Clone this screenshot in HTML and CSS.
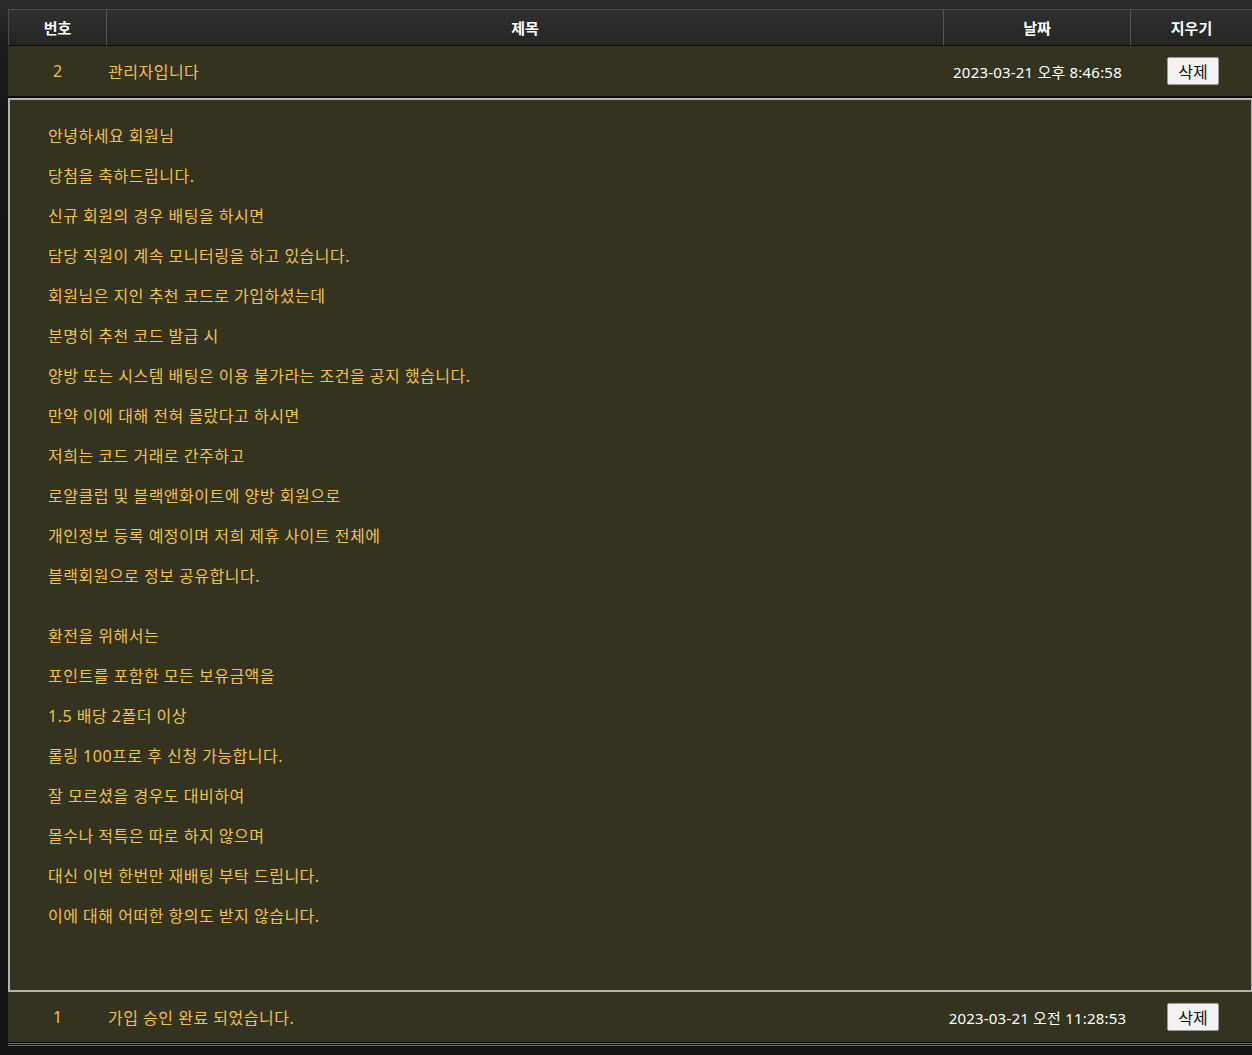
FILE: index.html
```html
<!DOCTYPE html>
<html lang="ko">
<head>
    <meta charset="UTF-8">
    <meta name="viewport" content="width=device-width, initial-scale=1.0">
    <title>쪽지함</title>
    <link rel="stylesheet" href="styles.css">
</head>
<body>
    <table class="board">
        <thead>
            <tr>
                <th class="col-no">번호</th>
                <th class="col-title">제목</th>
                <th class="col-date">날짜</th>
                <th class="col-del">지우기</th>
            </tr>
        </thead>
        <tbody>
            <tr class="post-row">
                <td class="no">2</td>
                <td class="title">관리자입니다</td>
                <td class="date">2023-03-21 오후 8:46:58</td>
                <td class="del"><button type="button" class="btn-del">삭제</button></td>
            </tr>
            <tr class="detail-row">
                <td colspan="4">
                    <div class="content">
                        <p>안녕하세요 회원님</p>
                        <p>당첨을 축하드립니다.</p>
                        <p>신규 회원의 경우 배팅을 하시면</p>
                        <p>담당 직원이 계속 모니터링을 하고 있습니다.</p>
                        <p>회원님은 지인 추천 코드로 가입하셨는데</p>
                        <p>분명히 추천 코드 발급 시</p>
                        <p>양방 또는 시스템 배팅은 이용 불가라는 조건을 공지 했습니다.</p>
                        <p>만약 이에 대해 전혀 몰랐다고 하시면</p>
                        <p>저희는 코드 거래로 간주하고</p>
                        <p>로얄클럽 및 블랙앤화이트에 양방 회원으로</p>
                        <p>개인정보 등록 예정이며 저희 제휴 사이트 전체에</p>
                        <p>블랙회원으로 정보 공유합니다.</p>
                        <div class="spacer"></div>
                        <p>환전을 위해서는</p>
                        <p>포인트를 포함한 모든 보유금액을</p>
                        <p>1.5 배당 2폴더 이상</p>
                        <p>롤링 100프로 후 신청 가능합니다.</p>
                        <p>잘 모르셨을 경우도 대비하여</p>
                        <p>몰수나 적특은 따로 하지 않으며</p>
                        <p>대신 이번 한번만 재배팅 부탁 드립니다.</p>
                        <p>이에 대해 어떠한 항의도 받지 않습니다.</p>
                    </div>
                </td>
            </tr>
            <tr class="post-row">
                <td class="no">1</td>
                <td class="title">가입 승인 완료 되었습니다.</td>
                <td class="date">2023-03-21 오전 11:28:53</td>
                <td class="del"><button type="button" class="btn-del">삭제</button></td>
            </tr>
        </tbody>
    </table>
</body>
</html>
```

FILE: styles.css
```css
html {
    overflow: hidden;
}
body {
    margin: 0;
    padding: 9px 0 0 8px;
    font-family: "Noto Sans", "Noto Sans CJK KR", sans-serif;
    font-size: 15px;
    background: linear-gradient(#2c2c2c 0, #1d1d1d 40px, #151515 120px, #131313 100%);
    min-height: 1055px;
    box-sizing: border-box;
}
.board {
    width: 1245px;
    border-collapse: separate;
    border-spacing: 0;
    table-layout: fixed;
    border-bottom: 3px double #6a6a6a;
}
.board th {
    height: 37px;
    padding: 0;
    color: #fff;
    font-weight: bold;
    font-size: 15px;
    background: linear-gradient(#303030, #252525);
    border-top: 1px solid #4c4c4c;
    border-right: 1px solid #555;
    border-bottom: 1px solid #0a0a0a;
    box-sizing: border-box;
}
.board th:first-child {
    border-left: 1px solid #4c4c4c;
}
.col-no { width: 99px; }
.col-title { width: 837px; }
.col-date { width: 187px; }
.col-del { width: 122px; }

.post-row td {
    height: 51px;
    padding: 0;
    background-color: #33331f;
    border-bottom: 1px solid #0c0c0c;
    box-sizing: border-box;
}
.post-row + .post-row td {
    height: 53px;
    border-bottom: 2px solid #0c0c0c;
}
.post-row .no {
    text-align: center;
    font-size: 16px;
    color: #f2c14e;
}
.post-row .title {
    padding-left: 1px;
    font-size: 16px;
    letter-spacing: 0.5px;
    color: #f2c14e;
}
.post-row .date {
    text-align: center;
    font-size: 15px;
    letter-spacing: 0.2px;
    color: #fff;
}
.post-row .del {
    text-align: center;
}
.btn-del {
    width: 52px;
    height: 28px;
    margin-left: 2px;
    padding: 0;
    font-family: "Noto Sans CJK KR", sans-serif;
    font-size: 16px;
    color: #111;
    background-color: #f3f3f3;
    border: 1px solid #9a9a9a;
    border-radius: 2px;
}
.detail-row td {
    padding: 1px 0 0 0;
    background-color: #0c0c0c;
}
.content {
    background-color: #33331f;
    border: 2px solid #b3b3b3;
    padding: 16px 38px 54px;
    font-size: 16px;
    letter-spacing: 0.5px;
    color: #f2c14e;
}
.content p {
    margin: 0;
    line-height: 40px;
    white-space: nowrap;
}
.content .spacer {
    height: 20px;
}
```
